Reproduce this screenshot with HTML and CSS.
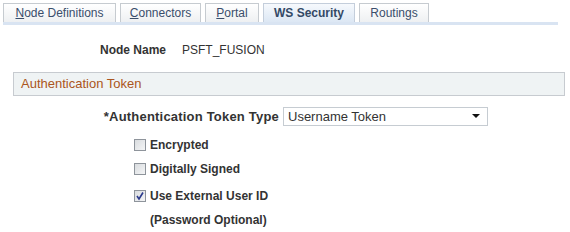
FILE: index.html
```html
<!DOCTYPE html>
<html>
<head>
<meta charset="utf-8">
<link rel="stylesheet" href="styles.css">
</head>
<body>
<div class="page">
  <div class="tabs">
    <div class="tab tab-nodes"><u>N</u>ode Definitions</div>
    <div class="tab tab-conn"><u>C</u>onnectors</div>
    <div class="tab tab-portal"><u>P</u>ortal</div>
    <div class="tab tab-ws active">WS Security</div>
    <div class="tab tab-rout">Routings</div>
  </div>
  <div class="tabline"></div>
  <div class="node-row">
    <span class="label">Node Name</span>
    <span class="value">PSFT_FUSION</span>
  </div>
  <div class="section">Authentication Token</div>
  <div class="type-row">
    <span class="label">*Authentication Token Type</span>
    <div class="select"><span>Username Token</span><span class="arrow"></span></div>
  </div>
  <div class="checks">
    <div class="check"><span class="box"></span><span class="label">Encrypted</span></div>
    <div class="check"><span class="box"></span><span class="label">Digitally Signed</span></div>
    <div class="check third"><span class="box checked"><svg width="10" height="10" viewBox="0 0 10 10"><path d="M2 5 L4 8 L8 1.5" fill="none" stroke="#2b3a8c" stroke-width="1.6"/></svg></span><span class="label">Use External User ID</span></div>
    <div class="note label">(Password Optional)</div>
  </div>
</div>
</body>
</html>
```
FILE: styles.css
```css
html, body { margin: 0; padding: 0; background: #fff; }
body { font-family: "Liberation Sans", Arial, sans-serif; font-size: 12px; color: #333; }
.page { width: 570px; height: 232px; overflow: hidden; }
.tabs { display: flex; gap: 4px; padding: 3px 0 0 3px; height: 19px; }
.tab {
  box-sizing: border-box; height: 19px; padding: 0;
  border: 1px solid #c6cbd0; border-bottom: none;
  background: linear-gradient(#ffffff, #eef0f2);
  color: #3a4e6b; font-size: 12px; line-height: 18px; text-align: center;
}
.tab-nodes { width: 113px; }
.tab-conn { width: 81px; }
.tab-portal { width: 54px; }
.tab-ws { width: 92px; }
.tab-rout { width: 70px; }
.tab u { text-decoration: underline; }
.tab.active { background: linear-gradient(#f6f9fd, #dce7f4); font-weight: bold; color: #334966; border-color: #c4cedb; }
.tabline { margin-left: 3px; width: 555px; height: 3px; background: #d9e4f2; }
.node-row { display: flex; align-items: center; margin-top: 17px; height: 16px; }
.node-row .label { width: 166px; text-align: right; font-weight: bold; }
.node-row .value { margin-left: 16px; }
.section {
  box-sizing: border-box; margin: 14px 0 0 13px; width: 552px; height: 24px;
  border: 1px solid #c7cbd0; background: #eff3f4; color: #ab5520;
  font-size: 13px; line-height: 22px; padding-left: 7px;
}
.type-row { display: flex; align-items: center; margin-top: 10px; height: 20px; }
.type-row .label { width: 279px; text-align: right; font-weight: bold; font-size: 13px; letter-spacing: 0.2px; }
.select {
  box-sizing: border-box; margin-left: 4px; width: 205px; height: 19px;
  border: 1px solid #c6ccd2; display: flex; align-items: center; justify-content: space-between;
  padding: 0 7px 0 4px; font-size: 13px; color: #333;
}
.arrow { width: 0; height: 0; border-left: 4px solid transparent; border-right: 4px solid transparent; border-top: 4px solid #111; }
.checks { margin-left: 134px; margin-top: 7px; }
.check { display: flex; align-items: center; height: 24px; }
.check.third { margin-top: 3px; }
.check .label, .note { font-weight: bold; font-size: 12px; }
.box {
  box-sizing: border-box; width: 12px; height: 12px; margin-right: 4px;
  border: 1px solid #8e949b; background: linear-gradient(135deg, #d9dcdf, #f4f5f6);
  display: flex; align-items: center; justify-content: center;
}
.box.checked svg { display: block; }
.note { margin-left: 16px; height: 24px; line-height: 24px; }
```
